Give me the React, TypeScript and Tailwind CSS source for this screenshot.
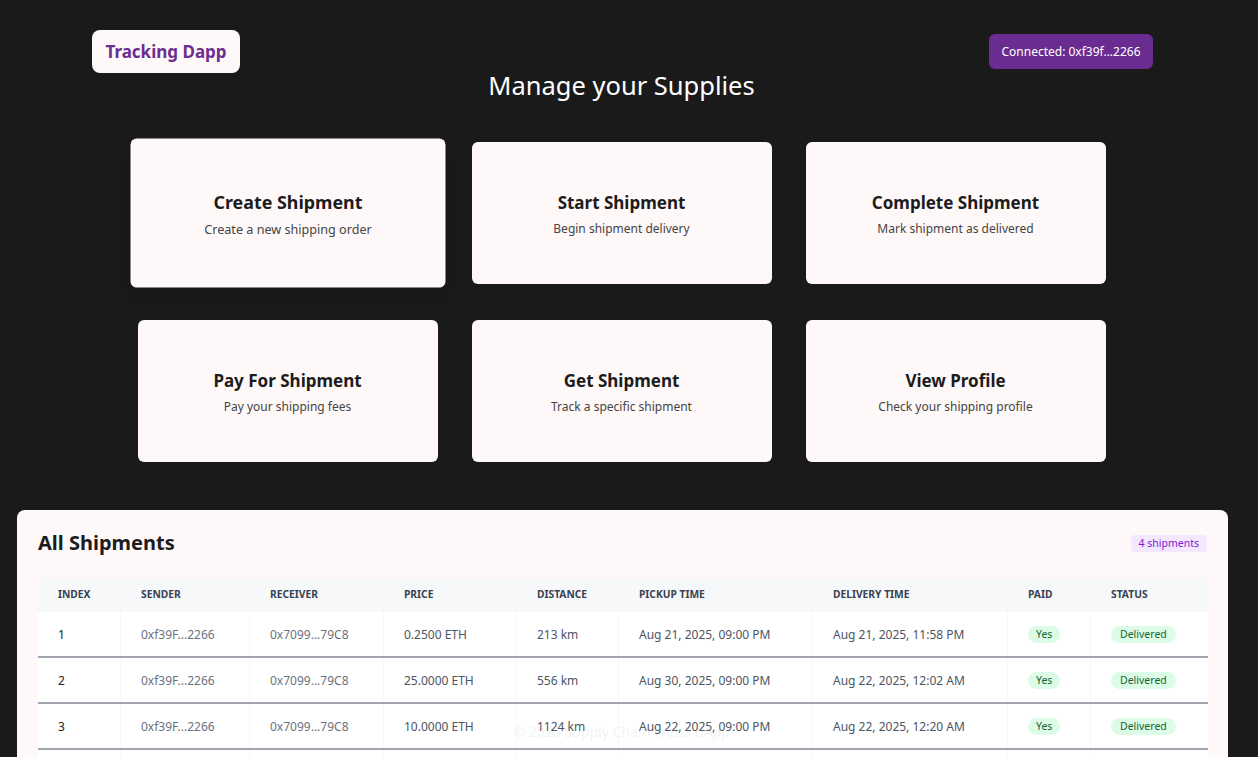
const actions = [
  { title: "Create Shipment", text: "Create a new shipping order", active: true },
  { title: "Start Shipment", text: "Begin shipment delivery" },
  { title: "Complete Shipment", text: "Mark shipment as delivered" },
  { title: "Pay For Shipment", text: "Pay your shipping fees" },
  { title: "Get Shipment", text: "Track a specific shipment" },
  { title: "View Profile", text: "Check your shipping profile" },
];

const columns = [
  { label: "Index", w: "w-[83px]" },
  { label: "Sender", w: "w-[129px]" },
  { label: "Receiver", w: "w-[134px]" },
  { label: "Price", w: "w-[133px]" },
  { label: "Distance", w: "w-[102px]" },
  { label: "Pickup Time", w: "w-[194px]" },
  { label: "Delivery Time", w: "w-[195px]" },
  { label: "Paid", w: "w-[83px]" },
  { label: "Status", w: "w-[117px]" },
];

const shipments = [
  { price: "0.2500 ETH", distance: "213 km", pickup: "Aug 21, 2025, 09:00 PM", delivery: "Aug 21, 2025, 11:58 PM" },
  { price: "25.0000 ETH", distance: "556 km", pickup: "Aug 30, 2025, 09:00 PM", delivery: "Aug 22, 2025, 12:02 AM" },
  { price: "10.0000 ETH", distance: "1124 km", pickup: "Aug 22, 2025, 09:00 PM", delivery: "Aug 22, 2025, 12:20 AM" },
  { price: "1.0000 ETH", distance: "82 km", pickup: "Aug 23, 2025, 09:00 PM", delivery: "Aug 23, 2025, 10:14 PM" },
];

export default function App() {
  return (
    <div
      className="relative h-screen overflow-hidden bg-[#1a1a1a]"
      style={{ fontFamily: '"Noto Sans", "Open Sans", sans-serif' }}
    >
      <div className="w-[1243px]">
        <header className="mt-[30px] flex h-[43px] items-center justify-between pl-[92px] pr-[90px]">
          <div className="flex h-[43px] w-[148px] items-center justify-center rounded-lg bg-[#fff8f8] text-[17px] font-bold text-[#6b2d90]">
            Tracking Dapp
          </div>
          <button className="h-[35px] w-[164px] rounded-md bg-[#6b2c91] text-[12px] text-white">
            Connected: 0xf39f...2266
          </button>
        </header>

        <h1 className="-mt-[6px] text-center text-[25.5px] leading-[36px] text-white">Manage your Supplies</h1>

        <div className="mx-auto mt-[39px] grid w-[968px] grid-cols-3 gap-x-[34px] gap-y-[36px]">
          {actions.map((a) => (
            <div
              key={a.title}
              className={
                "flex h-[142px] flex-col items-center justify-center rounded-md bg-[#fff8f8] pt-[3px] transition " +
                (a.active ? "scale-[1.05] shadow-lg" : "")
              }
            >
              <div className="text-[17px] font-bold leading-[24px] text-[#1c1c1c]">{a.title}</div>
              <div className="mt-[5px] text-[12px] leading-[18px] text-[#444]">{a.text}</div>
            </div>
          ))}
        </div>

        <section className="ml-[17px] mt-[48px] w-[1211px] rounded-lg bg-[#fff8f8] px-[21px] pb-6 pt-[18px]">
          <div className="flex items-center justify-between">
            <h2 className="text-[20px] font-bold leading-[30px] text-[#1c1c1c]">All Shipments</h2>
            <span className="rounded bg-[#f3e8ff] px-[8px] text-[10.5px] leading-[17px] text-[#7e22ce]">4 shipments</span>
          </div>

          <div className="mt-[20px] w-[1170px]">
            <div className="flex h-[34px] items-center bg-[#f7f8fa]">
              {columns.map((c) => (
                <div key={c.label} className={c.w + " pl-[20px] text-[10.25px] font-bold uppercase text-[#374151]"}>
                  {c.label}
                </div>
              ))}
            </div>
            {shipments.map((s, i) => (
              <div key={i} className="flex h-[46px] items-center border-b-2 border-[#a3a6b1] bg-white text-[12px]">
                <div className="w-[83px] self-stretch border-r border-[#f7f7f8] pl-[20px] leading-[45px] text-[#222]">{i + 1}</div>
                <div className="w-[129px] self-stretch border-r border-[#f7f7f8] pl-[20px] leading-[45px] text-[#6b7280]">0xf39F...2266</div>
                <div className="w-[134px] self-stretch border-r border-[#f7f7f8] pl-[20px] leading-[45px] text-[#6b7280]">0x7099...79C8</div>
                <div className="w-[133px] self-stretch border-r border-[#f7f7f8] pl-[20px] leading-[45px] text-[#4b5563]">{s.price}</div>
                <div className="w-[102px] self-stretch border-r border-[#f7f7f8] pl-[20px] leading-[45px] text-[#4b5563]">{s.distance}</div>
                <div className="w-[194px] self-stretch border-r border-[#f7f7f8] pl-[20px] leading-[45px] text-[#4b5563]">{s.pickup}</div>
                <div className="w-[195px] self-stretch border-r border-[#f7f7f8] pl-[20px] leading-[45px] text-[#4b5563]">{s.delivery}</div>
                <div className="flex w-[83px] items-center self-stretch border-r border-[#f7f7f8] pl-[20px] pt-[1px]">
                  <span className="rounded-full bg-[#dcfce7] px-[8px] text-[10.5px] leading-[17px] text-[#166534]">Yes</span>
                </div>
                <div className="flex w-[117px] items-center pl-[20px] pt-[1px]">
                  <span className="rounded-full bg-[#dcfce7] px-[9px] text-[10.5px] leading-[17px] text-[#166534]">Delivered</span>
                </div>
              </div>
            ))}
          </div>
        </section>
      </div>

      <footer className="pointer-events-none absolute bottom-[15px] left-0 w-[1243px] text-center text-[14px] leading-[20px] text-[#9ca3af]/15">
        © 2025 Supply Chain Web3 dApp
      </footer>
    </div>
  );
}
